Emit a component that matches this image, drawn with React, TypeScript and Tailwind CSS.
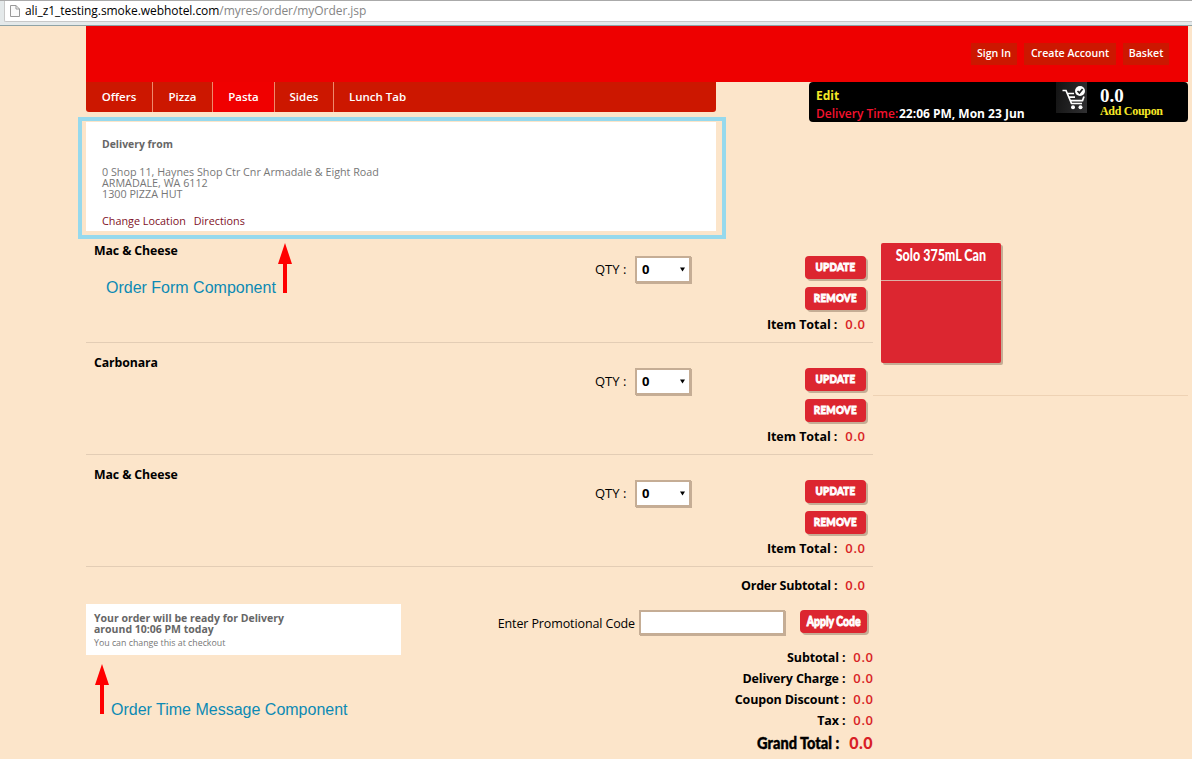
import React from "react";

const items = ["Mac & Cheese", "Carbonara", "Mac & Cheese"];
const totals = ["Subtotal :", "Delivery Charge :", "Coupon Discount :", "Tax :"];

const shadow = "shadow-[2px_2px_0_#c5ad95]";
const display = "font-['Lato',sans-serif] font-black";
const label = "text-[12.5px] font-bold";
const amount = "text-[13px] font-semibold tracking-[0.6px] text-[#d81f26] -mr-[0.6px]";

function Button({ children, className = "", textClass = "" }: { children: React.ReactNode; className?: string; textClass?: string }) {
  return (
    <button
      className={`flex h-[23px] shrink-0 items-center justify-center rounded-[4px] bg-[#dc2630] pb-px leading-none text-white ${shadow} ${display} ${className}`}
    >
      <span className={`inline-block whitespace-nowrap [-webkit-text-stroke:0.9px_white] ${textClass}`}>{children}</span>
    </button>
  );
}

function Arrow({ className = "" }: { className?: string }) {
  return (
    <svg className={`absolute h-[50px] w-[14px] ${className}`} viewBox="0 0 14 50">
      <path d="M7 0 L14 21 H9 V50 H5 V21 H0 Z" fill="#f00" />
    </svg>
  );
}

function Item({ name }: { name: string }) {
  return (
    <div className="flex h-[112px] border-b border-[#e3cdb5]">
      <div className="w-[509px] pt-[11px] pl-[8px] text-[12.3px] leading-[18px] font-bold tracking-[-0.1px]">{name}</div>
      <div className="mt-[25px] flex h-[27px] w-[170px] items-center">
        <span className="w-[40px] pt-px text-[13px] whitespace-nowrap">QTY :</span>
        <div className="flex h-[27px] w-[56px] items-center justify-between border-2 border-[#c5ad95] bg-white pr-[4px] pl-[5px] text-[13px] font-bold shadow-[1px_1px_0_#c5ad95]">
          <span>0</span>
          <svg className="h-[5px] w-[5px]" viewBox="0 0 6 5"><path d="M0 0H6L3 5Z" /></svg>
        </div>
      </div>
      <div className="flex flex-1 flex-col items-end pt-[25px] pr-[7px]">
        <Button className="w-[61px] text-[12px]" textClass="scale-x-[0.82] tracking-[0.3px]">UPDATE</Button>
        <Button className="mt-[8px] w-[61px] text-[12px]" textClass="scale-x-[0.82] tracking-[0.3px]">REMOVE</Button>
        <div className="mt-[5px] mr-px flex gap-[8px] leading-[18px] whitespace-nowrap">
          <span className={`${label} pt-px tracking-[-0.05px]`}>Item Total :</span>
          <span className={amount}>0.0</span>
        </div>
      </div>
    </div>
  );
}

export default function App() {
  return (
    <div className="relative flex h-[759px] w-[1192px] flex-col overflow-hidden bg-[#fce5ca] font-['Open_Sans',sans-serif] text-black">
      <div className="flex h-[26px] shrink-0 flex-col border-t border-b border-t-[#aaa] border-b-[#8fa3a6] bg-[#e4e9ea] pl-[4px]">
        <div className="flex h-[21px] items-center rounded-bl-[2px] border-b border-l border-[#c8c8c8] bg-white pl-[5px]">
          <svg className="mr-[5px] h-[12px] w-[10px]" viewBox="0 0 10 12" fill="#fafafa" stroke="#999">
            <path d="M.5 .5H6L9.5 4V11.5H.5Z M6 .5V4H9.5" />
          </svg>
          <span className="text-[12px] leading-none tracking-[-0.06px]">ali_z1_testing.smoke.webhotel.com<span className="text-[#858585]">/myres/order/myOrder.jsp</span></span>
        </div>
      </div>

      <div className="ml-[86px] flex w-[1102px] flex-col">
        <header className="flex h-[56px] items-center justify-end gap-[7px] bg-[#ee0000] pr-[19px] text-[10.6px] font-semibold text-white">
          <a className="flex h-[22px] w-[46px] items-center justify-center bg-[#cc1700] whitespace-nowrap">Sign In</a>
          <a className="flex h-[22px] w-[92px] items-center justify-center bg-[#cc1700] whitespace-nowrap">Create Account</a>
          <a className="flex h-[22px] w-[46px] items-center justify-center bg-[#cc1700] whitespace-nowrap">Basket</a>
        </header>

        <div className="flex h-[40px] justify-between">
          <nav className="flex h-[30px] w-[630px] overflow-hidden rounded-b-[3px] bg-[#cc1700] text-[11.5px] font-semibold text-white">
            <a className="flex w-[66px] items-center justify-center">Offers</a>
            <a className="flex w-[60px] items-center justify-center border-l border-[#ef8a6d]">Pizza</a>
            <a className="flex w-[62px] items-center justify-center border-l border-[#ef8a6d] bg-[#f00000]">Pasta</a>
            <a className="flex w-[59px] items-center justify-center border-l border-[#ef8a6d]">Sides</a>
            <a className="flex items-center border-l border-[#ef8a6d] pl-[15px]">Lunch Tab</a>
          </nav>
          <div className="flex h-[40px] w-[379px] rounded-[4px] bg-black font-bold">
            <div className="w-[247px] pt-[5px] pl-[7px] text-[12px] leading-[18px] whitespace-nowrap text-white">
              <div className="text-[#f6e727]">Edit</div>
              <div className="flex"><span className="w-[83px] font-semibold text-[#f4122f]">Delivery Time:</span><span>22:06 PM, Mon 23 Jun</span></div>
            </div>
            <div className="h-[31px] w-[31px] bg-[linear-gradient(100deg,#131313,#303032)]">
              <svg className="h-[31px] w-[31px]" viewBox="0 0 31 31" fill="none">
                <path d="M6.5 8.5H10L15.5 21.5H26M11.5 11.5H18M13 15.2H19M14.5 18.6H26.5L28 14.5" stroke="white" strokeWidth="1.7" />
                <circle cx="24" cy="9" r="5" fill="white" />
                <path d="M21.5 9L23.4 10.9L26.6 7" stroke="#222" strokeWidth="1.7" />
                <circle cx="17" cy="25.3" r="2" fill="white" />
                <circle cx="24.5" cy="25.3" r="2" fill="white" />
              </svg>
            </div>
            <div className="pt-[4px] pl-[13px] font-['Liberation_Serif',serif]">
              <div className="text-[19px] leading-[19px] text-white">0.0</div>
              <div className="text-[12px] leading-[12px] tracking-[-0.3px] whitespace-nowrap text-[#f6e727]">Add Coupon</div>
            </div>
          </div>
        </div>

        <div className="flex">
          <main className="w-[787px]">
            <section className="h-[109px] w-[630px] bg-white pt-[15px] pl-[16px] text-[10.75px] leading-[11px] text-[#777]">
              <h2 className="text-[10.4px] leading-[15px] font-bold text-[#666]">Delivery from</h2>
              <p className="mt-[15px] whitespace-nowrap">0 Shop 11, Haynes Shop Ctr Cnr Armadale &amp; Eight Road</p>
              <p>ARMADALE, WA 6112</p>
              <p>1300 PIZZA HUT</p>
              <div className="mt-[15px] flex gap-[8px] text-[10.8px] text-[#7e1026]"><a>Change Location</a><a>Directions</a></div>
            </section>
            {items.map((name, i) => <Item key={i} name={name} />)}
            <div className="flex h-[37px] items-center justify-end gap-[8px] pt-px pr-[8px]">
              <span className={`${label} pt-px tracking-[-0.2px]`}>Order Subtotal :</span><span className={amount}>0.0</span>
            </div>
            <div className="flex h-[51px] justify-between">
              <div className="h-[51px] w-[315px] bg-white pt-[9px] pl-[8px] text-[10.5px] leading-[11px] text-[#666]">
                <p className="font-bold">Your order will be ready for Delivery<br />around 10:06 PM today</p>
                <p className="mt-[3px] text-[8.8px] text-[#777]">You can change this at checkout</p>
              </div>
              <div className="flex items-start pt-[6px] pr-[6px]">
                <span className="mr-[4px] pt-px text-[12.5px] leading-[26px] tracking-[-0.12px]">Enter Promotional Code</span>
                <div className="h-[25px] w-[146px] border-2 border-[#c5ad95] bg-white shadow-[1px_1px_0_#c5ad95]" />
                <Button className="ml-[15px] w-[67px] text-[13px]" textClass="scale-x-[0.8]">Apply Code</Button>
              </div>
            </div>
            <div className="-mt-[8px] text-right leading-[21px]">
              {totals.map((text) => (
                <div key={text} className="flex justify-end gap-[8px]">
                  <span className={`${label} tracking-[-0.15px]`}>{text}</span><span className={amount}>0.0</span>
                </div>
              ))}
              <div className={`flex justify-end gap-[10px] text-[16px] leading-[23px] ${display}`}>
                <span className="inline-block origin-right scale-x-[0.91] [-webkit-text-stroke:0.4px_black]">Grand Total :</span><span className="tracking-[0.5px] text-[#d81f26]">0.0</span>
              </div>
            </div>
          </main>

          <aside className="h-[274px] w-[315px] border-b border-[#eed2b4] pt-[121px] pl-[8px]">
            <div className={`h-[120px] w-[120px] rounded-[2px] bg-[#dc2630] ${shadow}`}>
              <div className={`flex h-[38px] justify-center border-b border-[#dcb0a6] pt-[2px] text-[16px] leading-[20px] text-white ${display}`}>
                <span className="inline-block scale-x-[0.78] whitespace-nowrap">Solo 375mL Can</span>
              </div>
            </div>
          </aside>
        </div>
      </div>

      <div className="absolute top-[117px] left-[78px] h-[122px] w-[648px] border-4 border-[#96d9ed]" />
      <div className="absolute top-[278px] left-[106px] font-['Liberation_Sans',sans-serif] text-[16px] leading-[20px] whitespace-nowrap text-[#0c8ab4]">Order Form Component</div>
      <Arrow className="top-[243px] left-[278px]" />
      <div className="absolute top-[700px] left-[111px] font-['Liberation_Sans',sans-serif] text-[16px] leading-[20px] whitespace-nowrap text-[#0c8ab4]">Order Time Message Component</div>
      <Arrow className="top-[664px] left-[95px]" />
    </div>
  );
}
